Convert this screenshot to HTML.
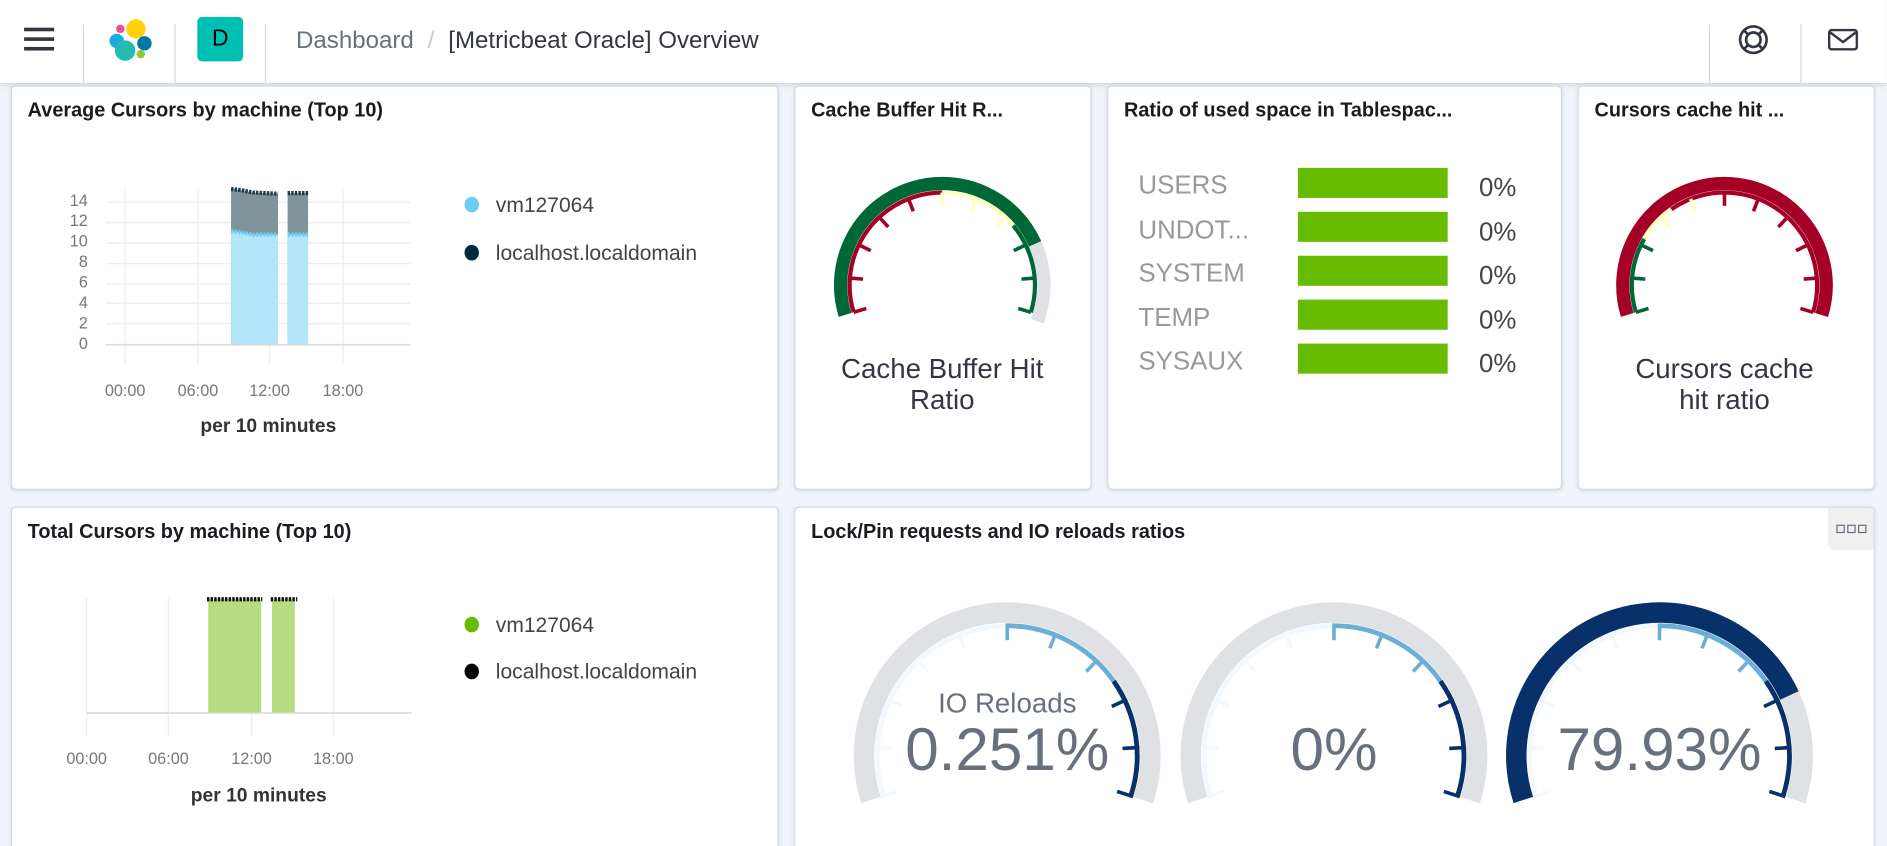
<!DOCTYPE html>
<html><head><meta charset="utf-8">
<style>
html,body{margin:0;padding:0;}
body{width:1887px;height:846px;overflow:hidden;background:#f1f4fa;font-family:"Liberation Sans",sans-serif;}
#s{position:absolute;left:0;top:0;width:1568px;height:703px;overflow:hidden;transform:scale(1.2034);transform-origin:0 0;}
.hdr{position:absolute;left:0;top:0;width:1568px;height:69px;background:#fff;border-bottom:1px solid #d3dae6;box-shadow:0 2px 3px rgba(152,162,179,.25);}
.sep{position:absolute;top:20px;width:1px;height:50px;background:#d3dae6;}
.p{position:absolute;background:#fff;border:1px solid #d3dae6;border-radius:4px;box-shadow:0 1px 3px rgba(152,162,179,.3);overflow:hidden;}
.t{position:absolute;left:13px;top:11px;font-weight:bold;font-size:16.5px;color:#1a1c21;white-space:nowrap;}
.abs{position:absolute;white-space:nowrap;}
svg{position:absolute;left:0;top:0;overflow:visible;}
.sq{display:inline-block;width:5px;height:5px;border:1.5px solid #69707d;margin:0 1px;}
</style></head><body><div id="s">
<div class="hdr">
 <div class="abs" style="left:20px;top:23px;width:25px;height:3px;background:#343741;box-shadow:0 8px 0 #343741,0 16px 0 #343741"></div>
 <div class="sep" style="left:69px"></div><div class="sep" style="left:145px"></div><div class="sep" style="left:220px"></div>
 <div class="sep" style="left:1420px"></div><div class="sep" style="left:1496px"></div>
 <svg width="1568" height="70">
  <circle cx="113" cy="24" r="8" fill="#fed10a"/>
  <circle cx="100" cy="24" r="3.5" fill="#f04e98"/>
  <circle cx="97" cy="34" r="6" fill="#1ba9e1"/>
  <circle cx="120" cy="36" r="6" fill="#0077a0"/>
  <circle cx="104" cy="42" r="8.5" fill="#24bbb1"/>
  <circle cx="117" cy="45" r="3.5" fill="#93c83e"/>
  <circle cx="1457" cy="33" r="11" fill="none" stroke="#343741" stroke-width="2.2"/>
  <circle cx="1457" cy="33" r="6" fill="none" stroke="#343741" stroke-width="2.2"/>
  <path d="M1449 25l4 4M1465 25l-4 4M1449 41l4-4M1465 41l-4-4" stroke="#343741" stroke-width="2.2"/>
  <rect x="1520" y="25" width="23" height="16" rx="2" fill="none" stroke="#343741" stroke-width="2"/>
  <path d="M1521 27l10.5 8 10.5-8" fill="none" stroke="#343741" stroke-width="2"/>
 </svg>
 <div class="abs" style="left:164px;top:14px;width:38px;height:37px;background:#00bfb3;border-radius:4px;color:#000;font-size:19px;line-height:37px;text-align:center">D</div>
 <div class="abs" style="left:246px;top:23px;font-size:20px;color:#69707d">Dashboard <span style="color:#c6cad1;margin:0 6px">/</span> <span style="color:#343741">[Metricbeat Oracle] Overview</span></div>
</div>

<div class="p" style="left:9px;top:71px;width:636px;height:334px">
 <div class="t">Average Cursors by machine (Top 10)</div>
</div>
<svg width="1568" height="703">
 <g stroke="#eee" stroke-width="1.2">
  <line x1="88" y1="168" x2="341" y2="168"/><line x1="88" y1="185" x2="341" y2="185"/><line x1="88" y1="202" x2="341" y2="202"/><line x1="88" y1="219" x2="341" y2="219"/><line x1="88" y1="236" x2="341" y2="236"/><line x1="88" y1="252" x2="341" y2="252"/><line x1="88" y1="269" x2="341" y2="269"/>
  <line x1="104" y1="158" x2="104" y2="302"/><line x1="164.5" y1="158" x2="164.5" y2="302"/><line x1="224" y1="158" x2="224" y2="302"/><line x1="285" y1="158" x2="285" y2="302"/>
 </g>
 <line x1="88" y1="286.5" x2="341" y2="286.5" stroke="#ddd" stroke-width="1.5"/>
 <path d="M192 157 L200 158 L210 160 L231 161 L231 286 L192 286Z" fill="#7f939b"/>
 <path d="M239 160.5 L256 160.5 L256 286 L239 286Z" fill="#7f939b"/>
 <path d="M192 192 L200 193 L210 195 L231 195 L231 286 L192 286Z" fill="#b3e5fb"/>
 <path d="M239 195 L256 195 L256 286 L239 286Z" fill="#b3e5fb"/>
 <path d="M192 157 L200 158 L210 160 L231 161 M239 160.5 L256 160.5" stroke="#1e3b4a" stroke-width="3.5" fill="none" stroke-dasharray="2 1"/>
 <path d="M192 192 L200 193 L210 195 L231 195 M239 195 L256 195" stroke="#6dcff6" stroke-width="3.5" fill="none" stroke-dasharray="2 1"/>
 <g font-size="13.5" fill="#777" text-anchor="end">
  <text x="73" y="171">14</text><text x="73" y="188">12</text><text x="73" y="205">10</text><text x="73" y="222">8</text><text x="73" y="239">6</text><text x="73" y="256">4</text><text x="73" y="273">2</text><text x="73" y="290">0</text>
 </g>
 <g font-size="13.5" fill="#777" text-anchor="middle">
  <text x="104" y="329">00:00</text><text x="164.5" y="329">06:00</text><text x="224" y="329">12:00</text><text x="285" y="329">18:00</text>
 </g>
 <text x="223" y="359" font-size="16" font-weight="bold" fill="#333" text-anchor="middle">per 10 minutes</text>
 <ellipse cx="392" cy="170" rx="6" ry="6.5" fill="#6dccf6"/>
 <text x="412" y="176" font-size="17.5" fill="#444">vm127064</text>
 <ellipse cx="392" cy="210" rx="6" ry="6.5" fill="#002a3a"/>
 <text x="412" y="216" font-size="17.5" fill="#444">localhost.localdomain</text>
</svg>

<div class="p" style="left:660px;top:71px;width:245px;height:334px"><div class="t">Cache Buffer Hit R...</div></div>
<div class="p" style="left:920px;top:71px;width:376px;height:334px"><div class="t">Ratio of used space in Tablespac...</div></div>
<div class="p" style="left:1311px;top:71px;width:245px;height:334px"><div class="t">Cursors cache hit ...</div></div>

<svg width="1568" height="703">
 <g fill="none">
  <circle cx="783" cy="237" r="84.5" stroke="#e0e1e5" stroke-width="11" stroke-dasharray="321.2 600" transform="rotate(-197 783 237)"/>
  <circle cx="783" cy="237" r="84.5" stroke="#006837" stroke-width="11" stroke-dasharray="255 600" transform="rotate(-197 783 237)"/>
  <circle cx="783" cy="237" r="77" stroke="#a50026" stroke-width="3.5" stroke-dasharray="143.8 600" transform="rotate(-197 783 237)"/>
  <circle cx="783" cy="237" r="77" stroke="#ffffbf" stroke-width="3.5" stroke-dasharray="67.2 600" transform="rotate(-90 783 237)"/>
  <circle cx="783" cy="237" r="77" stroke="#006837" stroke-width="3.5" stroke-dasharray="76.6 600" transform="rotate(-40 783 237)"/>
 </g>
 <g stroke-width="3">
  <line x1="783" y1="160" x2="783" y2="171" stroke="#a50026" transform="rotate(-107 783 237)"/>
  <line x1="783" y1="160" x2="783" y2="171" stroke="#a50026" transform="rotate(-85.6 783 237)"/>
  <line x1="783" y1="160" x2="783" y2="171" stroke="#a50026" transform="rotate(-64.2 783 237)"/>
  <line x1="783" y1="160" x2="783" y2="171" stroke="#a50026" transform="rotate(-42.8 783 237)"/>
  <line x1="783" y1="160" x2="783" y2="171" stroke="#a50026" transform="rotate(-21.4 783 237)"/>
  <line x1="783" y1="160" x2="783" y2="171" stroke="#ffffbf" transform="rotate(0 783 237)"/>
  <line x1="783" y1="160" x2="783" y2="171" stroke="#ffffbf" transform="rotate(21.4 783 237)"/>
  <line x1="783" y1="160" x2="783" y2="171" stroke="#ffffbf" transform="rotate(42.8 783 237)"/>
  <line x1="783" y1="160" x2="783" y2="171" stroke="#006837" transform="rotate(64.2 783 237)"/>
  <line x1="783" y1="160" x2="783" y2="171" stroke="#006837" transform="rotate(85.6 783 237)"/>
  <line x1="783" y1="160" x2="783" y2="171" stroke="#006837" transform="rotate(107 783 237)"/>
 </g>
 <text x="783" y="314" font-size="23" fill="#343741" text-anchor="middle">Cache Buffer Hit</text>
 <text x="783" y="340" font-size="23" fill="#343741" text-anchor="middle">Ratio</text>

 <g fill="none">
  <circle cx="1433" cy="237" r="84.5" stroke="#a50026" stroke-width="11" stroke-dasharray="315.6 600" transform="rotate(-197 1433 237)"/>
  <circle cx="1433" cy="237" r="77" stroke="#006837" stroke-width="3.5" stroke-dasharray="63.2 600" transform="rotate(-197 1433 237)"/>
  <circle cx="1433" cy="237" r="77" stroke="#ffffbf" stroke-width="3.5" stroke-dasharray="33.6 600" transform="rotate(-150 1433 237)"/>
  <circle cx="1433" cy="237" r="77" stroke="#a50026" stroke-width="3.5" stroke-dasharray="190.8 600" transform="rotate(-125 1433 237)"/>
 </g>
 <g stroke-width="3">
  <line x1="1433" y1="160" x2="1433" y2="171" stroke="#006837" transform="rotate(-107 1433 237)"/>
  <line x1="1433" y1="160" x2="1433" y2="171" stroke="#006837" transform="rotate(-85.6 1433 237)"/>
  <line x1="1433" y1="160" x2="1433" y2="171" stroke="#006837" transform="rotate(-64.2 1433 237)"/>
  <line x1="1433" y1="160" x2="1433" y2="171" stroke="#ffffbf" transform="rotate(-42.8 1433 237)"/>
  <line x1="1433" y1="160" x2="1433" y2="171" stroke="#ffffbf" transform="rotate(-21.4 1433 237)"/>
  <line x1="1433" y1="160" x2="1433" y2="171" stroke="#a50026" transform="rotate(0 1433 237)"/>
  <line x1="1433" y1="160" x2="1433" y2="171" stroke="#a50026" transform="rotate(21.4 1433 237)"/>
  <line x1="1433" y1="160" x2="1433" y2="171" stroke="#a50026" transform="rotate(42.8 1433 237)"/>
  <line x1="1433" y1="160" x2="1433" y2="171" stroke="#a50026" transform="rotate(64.2 1433 237)"/>
  <line x1="1433" y1="160" x2="1433" y2="171" stroke="#a50026" transform="rotate(85.6 1433 237)"/>
  <line x1="1433" y1="160" x2="1433" y2="171" stroke="#a50026" transform="rotate(107 1433 237)"/>
 </g>
 <text x="1433" y="314" font-size="23" fill="#343741" text-anchor="middle">Cursors cache</text>
 <text x="1433" y="340" font-size="23" fill="#343741" text-anchor="middle">hit ratio</text>

 <g font-size="21.5" fill="#999">
  <text x="946" y="161">USERS</text><text x="946" y="198">UNDOT...</text><text x="946" y="234">SYSTEM</text><text x="946" y="271">TEMP</text><text x="946" y="307">SYSAUX</text>
 </g>
 <g fill="#68bc00">
  <rect x="1078.5" y="139.5" width="124.5" height="25"/><rect x="1078.5" y="176" width="124.5" height="25"/><rect x="1078.5" y="212.5" width="124.5" height="25"/><rect x="1078.5" y="249" width="124.5" height="25"/><rect x="1078.5" y="285.5" width="124.5" height="25"/>
 </g>
 <g font-size="21.5" fill="#444">
  <text x="1229" y="163">0%</text><text x="1229" y="200">0%</text><text x="1229" y="236">0%</text><text x="1229" y="273">0%</text><text x="1229" y="309">0%</text>
 </g>
</svg>

<div class="p" style="left:9px;top:421px;width:636px;height:282px;border-bottom:none;border-radius:4px 4px 0 0"><div class="t">Total Cursors by machine (Top 10)</div></div>
<div class="p" style="left:660px;top:421px;width:896px;height:282px;border-bottom:none;border-radius:4px 4px 0 0">
 <div class="t">Lock/Pin requests and IO reloads ratios</div>
 <div class="abs" style="left:858px;top:0;width:38px;height:35px;background:#f0f0f1;border-radius:0 0 0 6px;line-height:33px;text-align:center"><span class="sq"></span><span class="sq"></span><span class="sq"></span></div>
</div>
<svg width="1568" height="703">
 <g stroke="#eee" stroke-width="1.2">
  <line x1="72" y1="497" x2="72" y2="612"/><line x1="140" y1="497" x2="140" y2="612"/><line x1="209" y1="497" x2="209" y2="612"/><line x1="277" y1="497" x2="277" y2="612"/>
 </g>
 <line x1="72" y1="592.5" x2="342" y2="592.5" stroke="#ddd" stroke-width="1.5"/>
 <rect x="173" y="498" width="44" height="94" fill="#b3dd80"/>
 <rect x="226" y="498" width="19" height="94" fill="#b3dd80"/>
 <path d="M172 498 L218 498 M225 498 L247 498" stroke="#111" stroke-width="3.5" stroke-dasharray="2 1"/>
 <g font-size="13.5" fill="#777" text-anchor="middle">
  <text x="72" y="635">00:00</text><text x="140" y="635">06:00</text><text x="209" y="635">12:00</text><text x="277" y="635">18:00</text>
 </g>
 <text x="215" y="666" font-size="16" font-weight="bold" fill="#333" text-anchor="middle">per 10 minutes</text>
 <ellipse cx="392" cy="519" rx="6" ry="6.5" fill="#68bc00"/>
 <text x="412" y="525" font-size="17.5" fill="#444">vm127064</text>
 <ellipse cx="392" cy="558" rx="6" ry="6.5" fill="#000"/>
 <text x="412" y="564" font-size="17.5" fill="#444">localhost.localdomain</text>

 <defs>
  <g id="gg">
   <circle cx="0" cy="0" r="119" fill="none" stroke="#e0e1e5" stroke-width="17" stroke-dasharray="448.6 900" transform="rotate(-198)"/>
   <circle cx="0" cy="0" r="108" fill="none" stroke="#f3f8fd" stroke-width="4" stroke-dasharray="203.6 900" transform="rotate(-198)"/>
   <circle cx="0" cy="0" r="108" fill="none" stroke="#6baed6" stroke-width="4" stroke-dasharray="103.7 900" transform="rotate(-90)"/>
   <circle cx="0" cy="0" r="108" fill="none" stroke="#08306b" stroke-width="4" stroke-dasharray="99.9 900" transform="rotate(-35)"/>
   <g stroke-width="3">
    <line x1="0" y1="-110" x2="0" y2="-96" stroke="#f3f8fd" transform="rotate(-108)"/>
    <line x1="0" y1="-110" x2="0" y2="-96" stroke="#f3f8fd" transform="rotate(-86.4)"/>
    <line x1="0" y1="-110" x2="0" y2="-96" stroke="#f3f8fd" transform="rotate(-64.8)"/>
    <line x1="0" y1="-110" x2="0" y2="-96" stroke="#f3f8fd" transform="rotate(-43.2)"/>
    <line x1="0" y1="-110" x2="0" y2="-96" stroke="#f3f8fd" transform="rotate(-21.6)"/>
    <line x1="0" y1="-110" x2="0" y2="-96" stroke="#6baed6" transform="rotate(0)"/>
    <line x1="0" y1="-110" x2="0" y2="-96" stroke="#6baed6" transform="rotate(21.6)"/>
    <line x1="0" y1="-110" x2="0" y2="-96" stroke="#6baed6" transform="rotate(43.2)"/>
    <line x1="0" y1="-110" x2="0" y2="-96" stroke="#08306b" transform="rotate(64.8)"/>
    <line x1="0" y1="-110" x2="0" y2="-96" stroke="#08306b" transform="rotate(86.4)"/>
    <line x1="0" y1="-110" x2="0" y2="-96" stroke="#08306b" transform="rotate(108)"/>
   </g>
  </g>
 </defs>
 <use href="#gg" transform="translate(837 628)"/>
 <use href="#gg" transform="translate(1108.5 628)"/>
 <use href="#gg" transform="translate(1379 628)"/>
 <circle cx="1379" cy="628" r="119" fill="none" stroke="#08306b" stroke-width="17" stroke-dasharray="359.3 900" transform="rotate(-198 1379 628)"/>
 <text x="837" y="592" font-size="23" fill="#69707d" text-anchor="middle">IO Reloads</text>
 <text x="837" y="640" font-size="50" fill="#69707d" text-anchor="middle">0.251%</text>
 <text x="1108.5" y="640" font-size="50" fill="#69707d" text-anchor="middle">0%</text>
 <text x="1379" y="640" font-size="50" fill="#69707d" text-anchor="middle">79.93%</text>
</svg>
</div></body></html>
